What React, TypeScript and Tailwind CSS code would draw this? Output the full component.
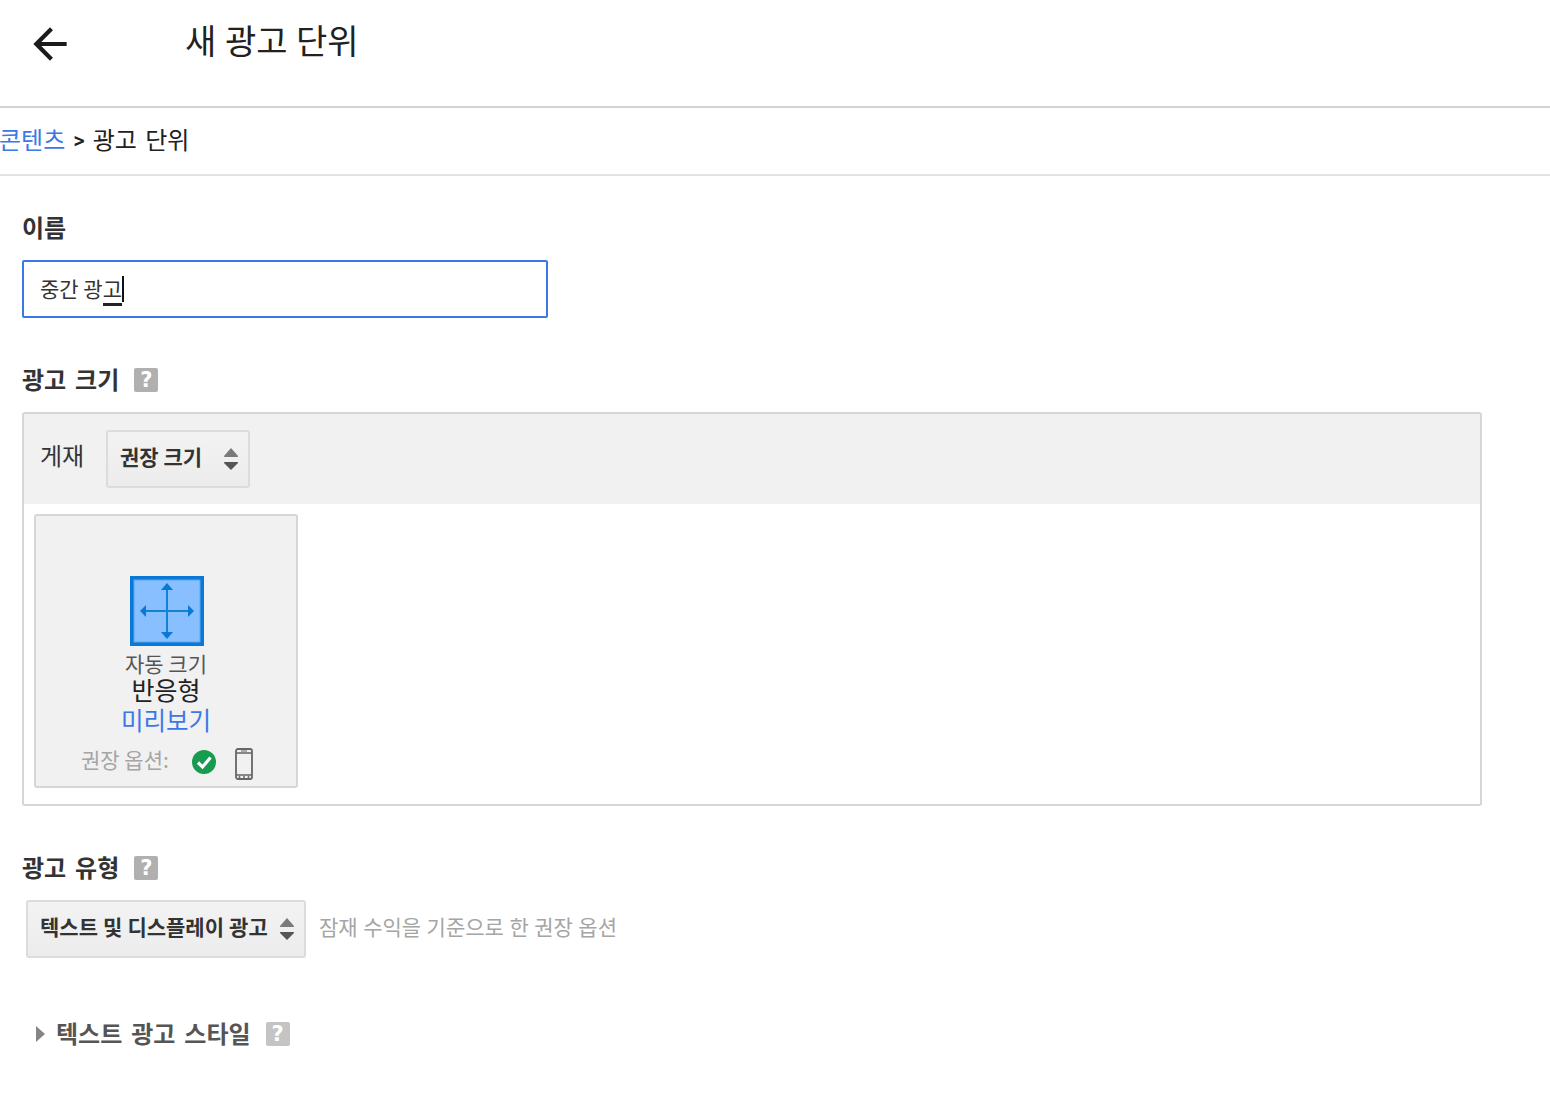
const FONT = "[font-family:'Noto_Sans_CJK_KR','Noto_Sans',sans-serif]";

function HelpIcon({ light }: { light?: boolean }) {
  return (
    <span
      className={`flex h-6 w-6 items-center justify-center rounded-[2px] text-[21px] leading-none font-bold text-white [font-family:'DejaVu_Sans',sans-serif] ${
        light ? "bg-[#c4c4c4]" : "bg-[#b0b0b0]"
      }`}
    >
      ?
    </span>
  );
}

// up/down arrows at the right of the select boxes
function SelectArrows() {
  return (
    <svg width="16" height="24" viewBox="0 0 16 24" className="shrink-0">
      <path d="M8 1 L15 9 Q15.5 10 14 10 H2 Q0.5 10 1 9 Z" fill="#7a7a7a" />
      <path d="M2 15 H14 Q15.5 15 15 16 L8 23 L1 16 Q0.5 15 2 15 Z" fill="#555555" />
    </svg>
  );
}

function AutoSizeIcon() {
  return (
    <svg width="74" height="70" viewBox="0 0 74 70" className="ml-[2px] block">
      <rect x="0" y="0" width="74" height="70" fill="#0a78d7" />
      <rect x="4" y="4" width="66" height="62" fill="#87bfff" stroke="#5aa6ec" strokeWidth="1" />
      <path d="M37 10 V60 M13 35 H61" fill="none" stroke="#1480d8" strokeWidth="2" />
      <path d="M37 7 L43 14 H31 Z" fill="#0a78d7" />
      <path d="M37 63 L43 56 H31 Z" fill="#0a78d7" />
      <path d="M10 35 L16 29 V41 Z" fill="#0a78d7" />
      <path d="M64 35 L58 29 V41 Z" fill="#0a78d7" />
    </svg>
  );
}

function CheckBadge() {
  return (
    <svg width="24" height="24" viewBox="0 0 24 24" className="-translate-y-px">
      <circle cx="12" cy="12" r="12" fill="#169b4f" />
      <path d="M6 12.5 L10.5 17 L18.5 7.5" fill="none" stroke="#ffffff" strokeWidth="3.2" />
    </svg>
  );
}

function PhoneIcon() {
  return (
    <svg width="18" height="32" viewBox="0 0 18 32" className="translate-y-px">
      <rect x="1" y="1" width="16" height="30" rx="2" fill="none" stroke="#666666" strokeWidth="1.8" />
      <path d="M1 5 H17 M1 27 H17" stroke="#666666" strokeWidth="1.4" />
      <path d="M6 3 H12" stroke="#666666" strokeWidth="1" />
      <circle cx="4.5" cy="29" r="1" fill="#666666" />
      <circle cx="9" cy="29" r="1" fill="#666666" />
      <circle cx="13.5" cy="29" r="1" fill="#666666" />
    </svg>
  );
}

export default function App() {
  return (
    <div className={`h-[1108px] overflow-hidden bg-white text-[#212121] ${FONT}`}>
      {/* Header */}
      <div className="flex h-[108px] items-start border-b-2 border-[#d3d3d6]">
        <div className="w-[185px] pt-[19px] pl-[25px]">
          <svg width="50" height="50" viewBox="0 0 24 24" fill="#1b1b1b">
            <path d="M20 11H7.83l5.59-5.59L12 4l-8 8 8 8 1.41-1.41L7.83 13H20v-2z" />
          </svg>
        </div>
        <h1 className="pt-[15px] text-[34px] leading-[50px] font-normal [word-spacing:1px]">새 광고 단위</h1>
      </div>

      {/* Breadcrumb */}
      <div className="flex h-[68px] items-center border-b-2 border-[#e2e2e2] pb-[5px] text-[24px] leading-[36px] whitespace-nowrap [word-spacing:3px]">
        <a className="-ml-px text-[#3b78e7]">콘텐츠</a>
        <span className="mr-[8px] ml-[8px] translate-y-[2px] text-[22px] font-medium [font-family:Roboto,sans-serif]">&gt;</span>
        <span>광고 단위</span>
      </div>

      <div className="pl-[22px]">
        {/* Name */}
        <div className="pt-[33px] text-[24px] leading-[36px] font-bold text-[#333333]">이름</div>
        <div className="mt-[15px] flex h-[58px] w-[526px] items-center rounded-[2px] border-2 border-[#3b78e7] pl-[16px] text-[21px] text-[#333333]">
          <span className="-translate-y-px leading-[30px]">
            중간 광<span className="border-b-[3px] border-[#222222]">고</span>
          </span>
          <span className="h-[26px] w-[2px] bg-[#111111]" />
        </div>

        {/* Ad size */}
        <div className="mt-[44px] flex h-[36px] items-center gap-[15px]">
          <span className="-translate-y-px text-[24px] leading-[36px] font-bold text-[#333333] [word-spacing:3.5px]">광고 크기</span>
          <HelpIcon />
        </div>
        <div className="mt-[14px] h-[394px] w-[1460px] rounded-[3px] border-2 border-[#d6d6d6]">
          <div className="flex h-[90px] items-start bg-[#f1f1f1] pt-[16px] pl-[16px]">
            <span className="w-[66px] text-[24px] leading-[50px] text-[#333333]">게재</span>
            <div className="flex h-[58px] w-[144px] items-center justify-between rounded-[3px] border-2 border-[#dcdcdc] bg-linear-to-b from-[#f3f3f3] to-[#ececec] pr-[9px] pl-[12px] text-[21px] font-bold text-[#333333]">
              <span className="-translate-y-[2px]">권장 크기</span>
              <SelectArrows />
            </div>
          </div>
          <div className="pt-[10px] pl-[10px]">
            <div className="flex h-[274px] w-[264px] flex-col items-center rounded-[3px] border-2 border-[#d6d6d6] bg-[#f1f1f1] pt-[60px]">
              <AutoSizeIcon />
              <div className="mt-[4px] text-[21px] leading-[26px] text-[#555555]">자동 크기</div>
              <div className="-translate-y-px text-[25px] leading-[28px] text-[#222222]">반응형</div>
              <div className="text-[24.5px] leading-[32px] text-[#3b78e7]">미리보기</div>
              <div className="mt-[10px] flex h-[34px] items-center pl-[3px] text-[21px] text-[#a5a5a5]">
                <span className="w-[110px] -translate-x-px -translate-y-[3px]">권장 옵션:</span>
                <CheckBadge />
                <span className="ml-[19px] flex"><PhoneIcon /></span>
              </div>
            </div>
          </div>
        </div>

        {/* Ad type */}
        <div className="mt-[44px] flex h-[36px] items-center gap-[15px]">
          <span className="-translate-y-px text-[24px] leading-[36px] font-bold text-[#333333] [word-spacing:3.5px]">광고 유형</span>
          <HelpIcon />
        </div>
        <div className="mt-[14px] ml-[4px] flex items-center">
          <div className="flex h-[58px] w-[280px] items-center justify-between rounded-[3px] border-2 border-[#dcdcdc] bg-linear-to-b from-[#f3f3f3] to-[#ececec] pr-[9px] pl-[12px] text-[21px] font-bold whitespace-nowrap text-[#333333] [word-spacing:0.3px]">
            <span className="-translate-y-[2px]">텍스트 및 디스플레이 광고</span>
            <SelectArrows />
          </div>
          <span className="ml-[13px] -translate-y-[2px] text-[21px] text-[#a5a5a5] [word-spacing:0.8px]">잠재 수익을 기준으로 한 권장 옵션</span>
        </div>

        {/* Text ad style */}
        <div className="mt-[58px] flex h-[36px] items-center pl-[13px]">
          <svg width="10" height="16" viewBox="0 0 10 16" className="shrink-0">
            <path d="M1 0 L10 8 L1 16 Z" fill="#858585" />
          </svg>
          <span className="ml-[11px] -translate-y-px text-[24px] leading-[36px] font-bold text-[#555555] [word-spacing:3.5px]">텍스트 광고 스타일</span>
          <span className="ml-[15px]"><HelpIcon light /></span>
        </div>
      </div>
    </div>
  );
}
